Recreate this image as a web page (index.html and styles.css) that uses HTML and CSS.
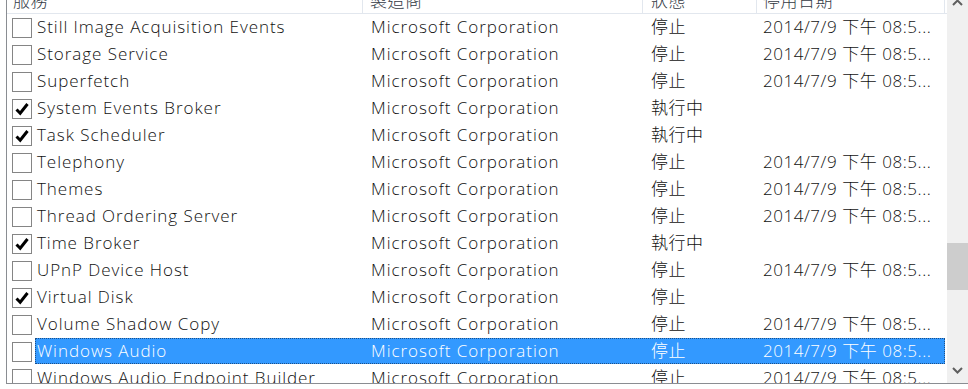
FILE: index.html
```html
<!DOCTYPE html>
<html lang="zh-Hant">
<head>
<meta charset="utf-8">
<title>服務</title>
<link rel="stylesheet" href="styles.css">
</head>
<body>
<div class="frame">
  <div class="list">
    <div class="header">
      <div class="h h-name">服務</div>
      <div class="h h-maker">製造商</div>
      <div class="h h-status">狀態</div>
      <div class="h h-date">停用日期</div>
    </div>

    <div class="row">
      <div class="chk"><span class="box"></span></div>
      <div class="cells"><div class="c c-name">Still Image Acquisition Events</div><div class="c c-maker">Microsoft Corporation</div><div class="c c-status">停止</div><div class="c c-date">2014/7/9 下午 08:5...</div></div>
    </div>
    <div class="row">
      <div class="chk"><span class="box"></span></div>
      <div class="cells"><div class="c c-name">Storage Service</div><div class="c c-maker">Microsoft Corporation</div><div class="c c-status">停止</div><div class="c c-date">2014/7/9 下午 08:5...</div></div>
    </div>
    <div class="row">
      <div class="chk"><span class="box"></span></div>
      <div class="cells"><div class="c c-name">Superfetch</div><div class="c c-maker">Microsoft Corporation</div><div class="c c-status">停止</div><div class="c c-date">2014/7/9 下午 08:5...</div></div>
    </div>
    <div class="row">
      <div class="chk"><span class="box"><svg class="tick" viewBox="0 0 18 18" width="18" height="18"><path d="M3.5 9.5 L7.2 13.2 L14.5 4" fill="none" stroke="#000" stroke-width="3"/></svg></span></div>
      <div class="cells"><div class="c c-name">System Events Broker</div><div class="c c-maker">Microsoft Corporation</div><div class="c c-status">執行中</div><div class="c c-date"></div></div>
    </div>
    <div class="row">
      <div class="chk"><span class="box"><svg class="tick" viewBox="0 0 18 18" width="18" height="18"><path d="M3.5 9.5 L7.2 13.2 L14.5 4" fill="none" stroke="#000" stroke-width="3"/></svg></span></div>
      <div class="cells"><div class="c c-name">Task Scheduler</div><div class="c c-maker">Microsoft Corporation</div><div class="c c-status">執行中</div><div class="c c-date"></div></div>
    </div>
    <div class="row">
      <div class="chk"><span class="box"></span></div>
      <div class="cells"><div class="c c-name">Telephony</div><div class="c c-maker">Microsoft Corporation</div><div class="c c-status">停止</div><div class="c c-date">2014/7/9 下午 08:5...</div></div>
    </div>
    <div class="row">
      <div class="chk"><span class="box"></span></div>
      <div class="cells"><div class="c c-name">Themes</div><div class="c c-maker">Microsoft Corporation</div><div class="c c-status">停止</div><div class="c c-date">2014/7/9 下午 08:5...</div></div>
    </div>
    <div class="row">
      <div class="chk"><span class="box"></span></div>
      <div class="cells"><div class="c c-name">Thread Ordering Server</div><div class="c c-maker">Microsoft Corporation</div><div class="c c-status">停止</div><div class="c c-date">2014/7/9 下午 08:5...</div></div>
    </div>
    <div class="row">
      <div class="chk"><span class="box"><svg class="tick" viewBox="0 0 18 18" width="18" height="18"><path d="M3.5 9.5 L7.2 13.2 L14.5 4" fill="none" stroke="#000" stroke-width="3"/></svg></span></div>
      <div class="cells"><div class="c c-name">Time Broker</div><div class="c c-maker">Microsoft Corporation</div><div class="c c-status">執行中</div><div class="c c-date"></div></div>
    </div>
    <div class="row">
      <div class="chk"><span class="box"></span></div>
      <div class="cells"><div class="c c-name">UPnP Device Host</div><div class="c c-maker">Microsoft Corporation</div><div class="c c-status">停止</div><div class="c c-date">2014/7/9 下午 08:5...</div></div>
    </div>
    <div class="row">
      <div class="chk"><span class="box"><svg class="tick" viewBox="0 0 18 18" width="18" height="18"><path d="M3.5 9.5 L7.2 13.2 L14.5 4" fill="none" stroke="#000" stroke-width="3"/></svg></span></div>
      <div class="cells"><div class="c c-name">Virtual Disk</div><div class="c c-maker">Microsoft Corporation</div><div class="c c-status">停止</div><div class="c c-date"></div></div>
    </div>
    <div class="row">
      <div class="chk"><span class="box"></span></div>
      <div class="cells"><div class="c c-name">Volume Shadow Copy</div><div class="c c-maker">Microsoft Corporation</div><div class="c c-status">停止</div><div class="c c-date">2014/7/9 下午 08:5...</div></div>
    </div>
    <div class="row">
      <div class="chk"><span class="box"></span></div>
      <div class="cells selected"><div class="c c-name">Windows Audio</div><div class="c c-maker">Microsoft Corporation</div><div class="c c-status">停止</div><div class="c c-date">2014/7/9 下午 08:5...</div></div>
    </div>
    <div class="row">
      <div class="chk"><span class="box"></span></div>
      <div class="cells"><div class="c c-name">Windows Audio Endpoint Builder</div><div class="c c-maker">Microsoft Corporation</div><div class="c c-status">停止</div><div class="c c-date">2014/7/9 下午 08:5...</div></div>
    </div>
  </div>

  <div class="scrollbar">
    <div class="sb-up"><svg viewBox="0 0 11 7" width="11" height="7"><polyline points="1,6 5.5,1.5 10,6" fill="none" stroke="#5f5f5f" stroke-width="2"/></svg></div>
    <div class="sb-track"><div class="sb-thumb"></div></div>
    <div class="sb-down"><svg viewBox="0 0 11 7" width="11" height="7"><polyline points="1,1 5.5,5.5 10,1" fill="none" stroke="#5f5f5f" stroke-width="2"/></svg></div>
  </div>
</div>
</body>
</html>
```

FILE: styles.css
```css
html, body {
  margin: 0;
  padding: 0;
  background: #ffffff;
  width: 968px;
  height: 389px;
  overflow: hidden;
}

body {
  font-family: "Open Sans", "Noto Sans CJK TC", sans-serif;
  font-size: 17px;
  font-weight: 300;
  letter-spacing: 0.95px;
  color: #111111;
}

.frame {
  display: flex;
  margin-left: 6px;
  height: 383px;
  border-left: 1px solid #8a8d92;
  border-bottom: 1px solid #8a8d92;
  overflow: hidden;
}

.list {
  width: 940px;
  flex: none;
  overflow: hidden;
}

.header {
  display: flex;
  height: 28px;
  margin-top: -14px;
  box-sizing: border-box;
  border-bottom: 1px solid #e2e7ee;
}

.h {
  box-sizing: border-box;
  border-right: 1px solid #e2e7ee;
  padding-top: 3px;
  line-height: 24px;
  color: #333a44;
  white-space: nowrap;
  overflow: hidden;
  letter-spacing: 0.5px;
}

.h-name { width: 356px; padding-left: 6px; }
.h-maker { width: 280px; padding-left: 7px; }
.h-status { width: 114px; padding-left: 8px; }
.h-date { width: 188px; padding-left: 6px; }

.row {
  display: flex;
  height: 27px;
}

.chk {
  width: 28px;
  flex: none;
  box-sizing: border-box;
  padding-left: 5px;
  display: flex;
  align-items: center;
}

.box {
  width: 20px;
  height: 20px;
  box-sizing: border-box;
  border: 1px solid #858585;
  background: #ffffff;
  display: block;
}

.tick {
  display: block;
}

.cells {
  display: flex;
  width: 910px;
  height: 26px;
  box-sizing: border-box;
  align-items: center;
  flex: none;
}

.cells.selected {
  background: #3399ff;
  color: #ffffff;
  outline: 1px dotted #1d4f86;
  outline-offset: -1px;
}

.c {
  box-sizing: border-box;
  white-space: nowrap;
  overflow: hidden;
  line-height: 26px;
}

.c-name { width: 328px; padding-left: 2px; }
.c-maker { width: 280px; padding-left: 8px; }
.c-status { width: 114px; padding-left: 8px; letter-spacing: 0.5px; }
.c-date { width: 188px; padding-left: 6px; letter-spacing: 0.55px; }

.scrollbar {
  width: 21px;
  flex: none;
  background: #f0f0f0;
  display: flex;
  flex-direction: column;
}

.sb-up {
  height: 10px;
  display: flex;
  justify-content: center;
  align-items: flex-end;
  overflow: hidden;
  padding-bottom: 4px;
  box-sizing: border-box;
}

.sb-track {
  flex: 1;
}

.sb-thumb {
  margin-top: 233px;
  height: 47px;
  background: #cdcdcd;
}

.sb-down {
  height: 25px;
  display: flex;
  justify-content: center;
  align-items: center;
}
```
